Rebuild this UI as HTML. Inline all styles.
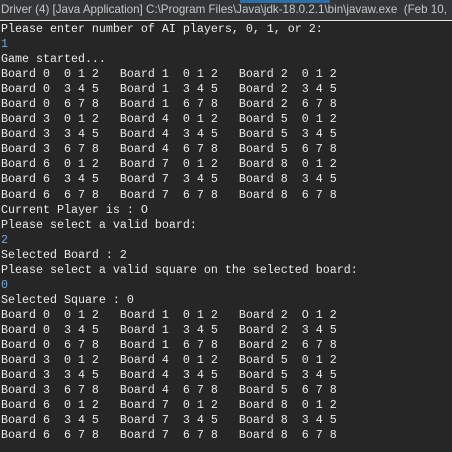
<!DOCTYPE html>
<html><head><style>
html,body{margin:0;padding:0;width:452px;height:452px;overflow:hidden;background:#262626;}
#t{position:absolute;left:0;top:0;width:452px;height:20px;background:#333537;color:#c8c8c8;font:11.6px "Liberation Sans",sans-serif;line-height:20px;white-space:nowrap;padding-left:1px;box-sizing:border-box;overflow:hidden;}
#b{position:absolute;left:240px;top:0;width:90px;height:3px;background:#2f6fa8;}
#l{position:absolute;left:0;top:20px;width:452px;height:1px;background:#e8e8e8;}
pre{position:absolute;left:1px;top:22px;margin:0;font:11.67px "Liberation Mono",monospace;line-height:15.04px;color:#ebebeb;}
.i{color:#7aa6da;}
</style></head><body>
<div id="t">Driver (4) [Java Application] C:\Program Files\Java\jdk-18.0.2.1\bin\javaw.exe&nbsp; (Feb 10,</div>
<div id="b"></div><div id="l"></div>
<pre>Please enter number of AI players, 0, 1, or 2:
<span class="i">1</span>
Game started...
Board 0  0 1 2   Board 1  0 1 2   Board 2  0 1 2
Board 0  3 4 5   Board 1  3 4 5   Board 2  3 4 5
Board 0  6 7 8   Board 1  6 7 8   Board 2  6 7 8
Board 3  0 1 2   Board 4  0 1 2   Board 5  0 1 2
Board 3  3 4 5   Board 4  3 4 5   Board 5  3 4 5
Board 3  6 7 8   Board 4  6 7 8   Board 5  6 7 8
Board 6  0 1 2   Board 7  0 1 2   Board 8  0 1 2
Board 6  3 4 5   Board 7  3 4 5   Board 8  3 4 5
Board 6  6 7 8   Board 7  6 7 8   Board 8  6 7 8
Current Player is : O
Please select a valid board:
<span class="i">2</span>
Selected Board : 2
Please select a valid square on the selected board:
<span class="i">0</span>
Selected Square : 0
Board 0  0 1 2   Board 1  0 1 2   Board 2  O 1 2
Board 0  3 4 5   Board 1  3 4 5   Board 2  3 4 5
Board 0  6 7 8   Board 1  6 7 8   Board 2  6 7 8
Board 3  0 1 2   Board 4  0 1 2   Board 5  0 1 2
Board 3  3 4 5   Board 4  3 4 5   Board 5  3 4 5
Board 3  6 7 8   Board 4  6 7 8   Board 5  6 7 8
Board 6  0 1 2   Board 7  0 1 2   Board 8  0 1 2
Board 6  3 4 5   Board 7  3 4 5   Board 8  3 4 5
Board 6  6 7 8   Board 7  6 7 8   Board 8  6 7 8</pre>
</body></html>
